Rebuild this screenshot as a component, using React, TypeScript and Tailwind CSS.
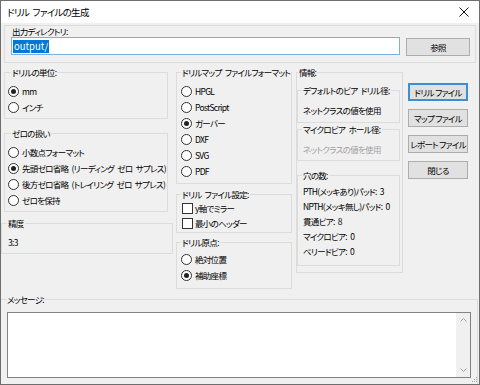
import type { ReactNode } from 'react';

function Radio({ checked, label }: { checked?: boolean; label: string }) {
  return (
    <div className="flex items-center h-[16px] gap-[3px]">
      <span className="w-[11px] h-[11px] rounded-full border border-[#333333] bg-white flex items-center justify-center shrink-0">
        {checked && <span className="w-[5px] h-[5px] rounded-full bg-[#222222]" />}
      </span>
      <span>{label}</span>
    </div>
  );
}

function Check({ label }: { label: string }) {
  return (
    <div className="flex items-center h-[15px] gap-[2px]">
      <span className="w-[11px] h-[11px] border border-[#333333] bg-white shrink-0" />
      <span>{label}</span>
    </div>
  );
}

function Group({ label, className, legendClass, children }: { label: string; className: string; legendClass: string; children: ReactNode }) {
  return (
    <fieldset className={`border border-[#dcdcdc] ${className}`}>
      <legend className={`leading-[13px] px-[1px] ${legendClass}`}>{label}</legend>
      {children}
    </fieldset>
  );
}

function Btn({ label, primary }: { label: string; primary?: boolean }) {
  return (
    <button
      className={`h-[18px] w-[60px] bg-[#e1e1e1] flex items-center justify-center leading-none ${
        primary ? 'border-2 border-[#3c8fd6]' : 'border border-[#adadad]'
      }`}
    >
      {label}
    </button>
  );
}

export default function App() {
  return (
    <div className="relative w-[480px] h-[385px] border border-[#6e6e6e] bg-[#f0f0f0] flex flex-col text-[8.5px] tracking-[-0.7px] [word-spacing:2px] whitespace-nowrap text-black font-['Noto_Sans_CJK_JP','Liberation_Sans',sans-serif] [font-feature-settings:'palt'] overflow-hidden">
      {/* title bar */}
      <div className="h-[22px] bg-white flex items-center justify-between pl-[6px] pr-[10px] shrink-0">
        <span className="text-[9.5px]">ドリル ファイルの生成</span>
        <svg width="10" height="10" viewBox="0 0 10 10" className="text-[#111]">
          <path d="M0.5 0.5L9.5 9.5M9.5 0.5L0.5 9.5" stroke="currentColor" strokeWidth="1" />
        </svg>
      </div>

      {/* output directory */}
      <div className="mt-[2px] mx-[3px] h-[38px] border border-[#dcdcdc] shrink-0">
        <div className="ml-[7px] leading-[11px]">出力ディレクトリ:</div>
        <div className="flex items-start ml-[6px] gap-[6px]">
          <div className="w-[389px] h-[18px] bg-white border border-[#7eaede] flex items-center px-[1px]">
            <span className="bg-[#0078d7] text-white text-[9.5px] tracking-normal leading-[13px] px-[1px]">output/</span>
          </div>
          <div className="mt-[1px]">
            <button className="h-[18px] w-[64px] bg-[#e1e1e1] border border-[#adadad] flex items-center justify-center leading-none">参照</button>
          </div>
        </div>
      </div>

      <div className="flex mt-[3px] h-[223px] shrink-0">
        {/* left column */}
        <div className="w-[172px] flex flex-col">
          <Group label="ドリルの単位:" className="ml-[3px] w-[164px] h-[53px] pt-[4px] pl-[3px]" legendClass="ml-[3px]">
            <Radio checked label="mm" />
            <Radio label="インチ" />
          </Group>
          <Group label="ゼロの扱い" className="ml-[3px] mt-[8px] w-[164px] h-[85px] pt-[4px] pl-[3px]" legendClass="ml-[3px]">
            <Radio label="小数点フォーマット" />
            <Radio checked label="先頭ゼロ省略 (リーディング ゼロ サプレス)" />
            <Radio label="後方ゼロ省略 (トレイリング ゼロ サプレス)" />
            <Radio label="ゼロを保持" />
          </Group>
          <Group label="精度" className="mt-[5px] w-[172px] h-[37px] pt-[4px] pl-[6px]" legendClass="-ml-px">
            <div className="h-[16px] flex items-center">3:3</div>
          </Group>
        </div>

        {/* middle column */}
        <div className="ml-[3px] w-[116px] flex flex-col">
          <Group label="ドリルマップ ファイルフォーマット" className="w-[116px] h-[118px] pt-[4px] pl-[4px]" legendClass="ml-0">
            <Radio label="HPGL" />
            <Radio label="PostScript" />
            <Radio checked label="ガーバー" />
            <Radio label="DXF" />
            <Radio label="SVG" />
            <Radio label="PDF" />
          </Group>
          <Group label="ドリル ファイル設定:" className="mt-[4px] w-[116px] h-[45px] pl-[5px]" legendClass="-ml-px">
            <Check label="y軸でミラー" />
            <Check label="最小のヘッダー" />
          </Group>
          <Group label="ドリル原点:" className="mt-[3px] w-[116px] h-[53px] pt-[2px] pl-[4px]" legendClass="ml-0">
            <Radio label="絶対位置" />
            <Radio checked label="補助座標" />
          </Group>
        </div>

        {/* info column */}
        <Group label="情報:" className="ml-[4px] w-[107px] h-[207px] pl-[0px]" legendClass="ml-[1px]">
          <Group label="デフォルトのビア ドリル径:" className="mt-[5px] w-[103px] h-[39px] pt-[5px] pl-[5px]" legendClass="-ml-px">
            <div className="h-[16px] flex items-center">ネットクラスの値を使用</div>
          </Group>
          <Group label="マイクロビア ホール径:" className="w-[103px] h-[38px] pt-[5px] pl-[5px]" legendClass="-ml-px">
            <div className="h-[16px] flex items-center text-[#a0a0a0]">ネットクラスの値を使用</div>
          </Group>
          <Group label="穴の数:" className="mt-[8px] w-[103px] h-[97px] pt-[2px] pl-[5px]" legendClass="-ml-px">
            <div className="h-[15px] flex items-center">PTH(メッキあり)パッド: 3</div>
            <div className="h-[15px] flex items-center">NPTH(メッキ無し)パッド: 0</div>
            <div className="h-[15px] flex items-center">貫通ビア: 8</div>
            <div className="h-[15px] flex items-center">マイクロビア: 0</div>
            <div className="h-[15px] flex items-center">ベリードビア: 0</div>
          </Group>
        </Group>

        {/* buttons */}
        <div className="ml-[5px] mt-[17px] flex flex-col gap-[8px]">
          <Btn primary label="ドリル ファイル" />
          <Btn label="マップ ファイル" />
          <Btn label="レポート ファイル" />
          <Btn label="閉じる" />
        </div>
      </div>

      {/* messages */}
      <Group label="メッセージ:" className="mt-[4px] w-[477px] flex-1 border-b-0 border-l-0 pl-[6px]" legendClass="-ml-px">
        <div className="mt-[6px] w-[464px] h-[66px] bg-white border border-[#828282] flex justify-end">
          <div className="w-[14px] h-full bg-[#f0f0f0] flex flex-col items-center justify-between py-[5px]">
            <svg width="7" height="4" viewBox="0 0 7 4"><path d="M0.5 3.5L3.5 0.5L6.5 3.5" stroke="#a3a3a3" fill="none" /></svg>
            <svg width="7" height="4" viewBox="0 0 7 4"><path d="M0.5 0.5L3.5 3.5L6.5 0.5" stroke="#a3a3a3" fill="none" /></svg>
          </div>
        </div>
      </Group>

      {/* size grip */}
      <svg width="6" height="6" viewBox="0 0 6 6" className="absolute right-[1px] bottom-[1px]">
        <rect x="4" y="0" width="1" height="1" fill="#a8a8a8" />
        <rect x="2" y="2" width="1" height="1" fill="#a8a8a8" />
        <rect x="4" y="2" width="1" height="1" fill="#a8a8a8" />
        <rect x="0" y="4" width="1" height="1" fill="#a8a8a8" />
        <rect x="2" y="4" width="1" height="1" fill="#a8a8a8" />
        <rect x="4" y="4" width="1" height="1" fill="#a8a8a8" />
      </svg>
    </div>
  );
}
